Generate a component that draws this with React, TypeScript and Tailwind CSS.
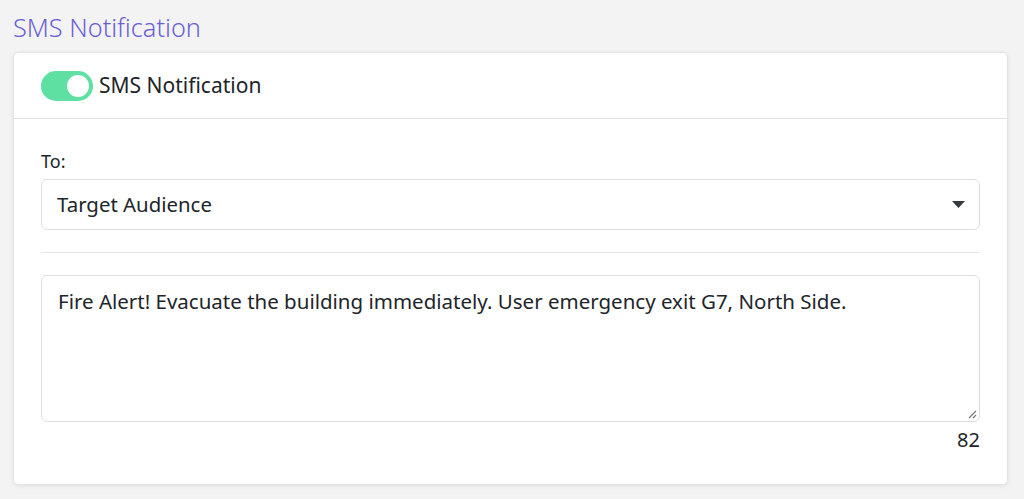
import { ReactElement } from 'react'

const App = (): ReactElement => {
    const message =
        'Fire Alert! Evacuate the building immediately. User emergency exit G7, North Side.'

    return (
        <div className="min-h-[499px] w-full bg-[#f3f3f3] px-[13px] pt-[10px] font-['Noto_Sans','Open_Sans',sans-serif] text-[#212529]">
            <h1 className="text-[25.3px] font-light leading-[34px] text-[#6c5fd6]">
                SMS Notification
            </h1>
            <div className="mt-[8px] w-[995px] rounded-[5px] border border-[#e4e4e4] bg-white shadow-[0_1px_4px_rgba(0,0,0,0.08)]">
                <div className="flex h-[66px] items-center border-b border-[#e2e2e2] px-[27px]">
                    <div className="flex h-[30px] w-[52px] items-center justify-end rounded-full bg-[#5ee0a2] pr-[4px]">
                        <div className="h-[22px] w-[22px] rounded-full bg-white" />
                    </div>
                    <span className="ml-[6px] text-[21px]">SMS Notification</span>
                </div>
                <div className="px-[27px] pt-[30px] pb-[30px]">
                    <label className="block text-[18px] leading-[24px]">To:</label>
                    <div className="mt-[6px] flex h-[51px] items-center justify-between rounded-[6px] border border-[#dedede] pl-[15px] pr-[14px]">
                        <span className="text-[20.4px]">Target Audience</span>
                        <svg width="13" height="8" viewBox="0 0 13 8">
                            <path d="M0 0 L13 0 L6.5 7 Z" fill="#343a40" />
                        </svg>
                    </div>
                    <div className="my-[22px] h-px bg-[#e6e6e6]" />
                    <div className="relative h-[147px] rounded-[6px] border border-[#dedede] px-[16px] pt-[10px]">
                        <p className="text-[20.5px] leading-[30px]">{message}</p>
                        <svg
                            className="absolute bottom-[2px] right-[2px]"
                            width="10"
                            height="10"
                            viewBox="0 0 10 10"
                        >
                            <path d="M9 2 L2 9 M9 6 L6 9" stroke="#777" strokeWidth="1.2" />
                        </svg>
                    </div>
                    <div className="mt-[4px] text-right text-[20px] leading-[28px]">
                        {message.length}
                    </div>
                </div>
            </div>
        </div>
    )
}

export default App
